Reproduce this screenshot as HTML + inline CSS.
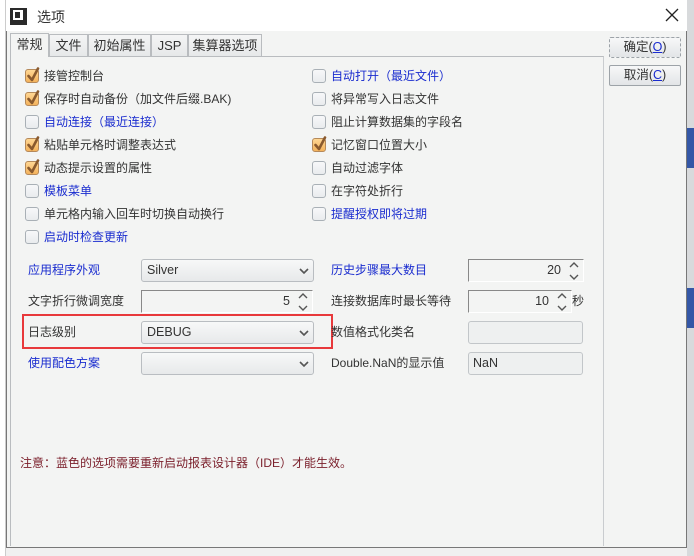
<!DOCTYPE html>
<html><head><meta charset="utf-8"><style>
*{margin:0;padding:0;box-sizing:border-box}
body{width:694px;height:556px;overflow:hidden;background:#f0f0f0;font-family:"Liberation Sans","Noto Sans CJK SC",sans-serif;font-size:12px;color:#333;position:relative}
.a{position:absolute}
.dlg{left:6px;top:0;width:681px;height:548px;background:#f3f4f3;border:1px solid #777;border-top:none}
.title{left:6px;top:0;width:681px;height:31px;background:#fff}
.tab{top:34px;height:22px;border:1px solid #b9bcbf;border-bottom:none;background:linear-gradient(#f4f5f5,#e6e8e9);text-align:center;line-height:21px;font-size:13px;color:#333}
.cb{width:14px;height:14px;border:1px solid #a9b0b6;border-radius:3px;background:linear-gradient(#f7f8f9,#e9ecee)}
.cb.on{background:linear-gradient(#ffd693,#f4b25c);border-color:#b5895a}
.cb svg{position:absolute;left:0;top:-3px}
.lbl{font-size:12px;line-height:16px;white-space:nowrap}
.blue{color:#1a2ccf}
.combo{width:173px;height:23px;border:1px solid #b9bdc1;border-radius:3px;background:linear-gradient(#f7f8f8,#e7e9ea);padding-left:5px;line-height:21px;font-size:12.5px}
.spin{height:23px;border:1px solid #888;border-right-color:#fff;border-bottom-color:#fff;background:#f3f4f3;text-align:right;line-height:21px;font-size:12.5px}
.btn{left:609px;width:72px;height:21px;border:1px solid #9da3a8;border-radius:2px;background:linear-gradient(#f7f8f8,#e2e5e7);text-align:center;line-height:19px;font-size:12.5px}
.arr{position:absolute;right:3px;top:3px}
</style></head><body>
<svg width="0" height="0" style="position:absolute"><defs>
<symbol id="ck" viewBox="0 0 14 16"><path d="M2.5 9 L6 13 L12 1.5" fill="none" stroke="#8a5a2e" stroke-width="2.6" stroke-linecap="round" stroke-linejoin="round"/></symbol>
<symbol id="dn" viewBox="0 0 12 8"><path d="M2 2 L6 6 L10 2" fill="none" stroke="#555" stroke-width="1.6"/></symbol>
<symbol id="ud" viewBox="0 0 12 20"><path d="M2 6 L6 2 L10 6 M2 14 L6 18 L10 14" fill="none" stroke="#555" stroke-width="1.4"/></symbol>
</defs></svg>
<div class="a" style="left:0;top:0;width:6px;height:556px;background:#fff;border-right:1px solid #ccc"></div>
<div class="a" style="left:687px;top:0;width:7px;height:556px;background:#d8dadc"></div>
<div class="a" style="left:687px;top:128px;width:7px;height:40px;background:#3457a6"></div>
<div class="a" style="left:687px;top:288px;width:7px;height:40px;background:#3457a6"></div>
<div class="a dlg"></div>
<div class="a title"></div>
<div class="a" style="left:10px;top:8px;width:17px;height:17px;background:#2a2a2a"></div>
<div class="a" style="left:13px;top:10px;width:10px;height:10px;border:2px solid #fff;border-right-width:3px"></div>
<div class="a" style="left:37px;top:7px;font-size:14px">选项</div>
<svg class="a" style="left:665px;top:8px" width="14" height="14"><path d="M1 1 L13 13 M13 1 L1 13" stroke="#222" stroke-width="1.3"/></svg>
<div class="a" style="left:10px;top:56px;width:594px;height:490px;border-top:1px solid #b9bcbf;border-left:1px solid #b9bcbf;border-right:1px solid #c9cccf"></div>
<div class="a tab" style="left:10px;width:39px;top:33px;height:24px;background:#f3f4f3">常规</div>
<div class="a tab" style="left:49px;width:39px">文件</div>
<div class="a tab" style="left:88px;width:63px">初始属性</div>
<div class="a tab" style="left:151px;width:37px">JSP</div>
<div class="a tab" style="left:188px;width:74px">集算器选项</div>
<div class="a btn" style="top:37px;border-style:dashed">确定(<span style="color:#1a2ccf;text-decoration:underline">O</span>)</div>
<div class="a btn" style="top:65px">取消(<span style="color:#1a2ccf;text-decoration:underline">C</span>)</div>

<div class="a cb on" style="left:25px;top:69px"><svg width="14" height="16"><use href="#ck"/></svg></div><div class="a lbl" style="left:44px;top:68px">接管控制台</div>
<div class="a cb on" style="left:25px;top:92px"><svg width="14" height="16"><use href="#ck"/></svg></div><div class="a lbl" style="left:44px;top:91px">保存时自动备份（加文件后缀.BAK)</div>
<div class="a cb" style="left:25px;top:115px"></div><div class="a lbl blue" style="left:44px;top:114px">自动连接（最近连接）</div>
<div class="a cb on" style="left:25px;top:138px"><svg width="14" height="16"><use href="#ck"/></svg></div><div class="a lbl" style="left:44px;top:137px">粘贴单元格时调整表达式</div>
<div class="a cb on" style="left:25px;top:161px"><svg width="14" height="16"><use href="#ck"/></svg></div><div class="a lbl" style="left:44px;top:160px">动态提示设置的属性</div>
<div class="a cb" style="left:25px;top:184px"></div><div class="a lbl blue" style="left:44px;top:183px">模板菜单</div>
<div class="a cb" style="left:25px;top:207px"></div><div class="a lbl" style="left:44px;top:206px">单元格内输入回车时切换自动换行</div>
<div class="a cb" style="left:25px;top:230px"></div><div class="a lbl blue" style="left:44px;top:229px">启动时检查更新</div>

<div class="a cb" style="left:312px;top:69px"></div><div class="a lbl blue" style="left:331px;top:68px">自动打开（最近文件）</div>
<div class="a cb" style="left:312px;top:92px"></div><div class="a lbl" style="left:331px;top:91px">将异常写入日志文件</div>
<div class="a cb" style="left:312px;top:115px"></div><div class="a lbl" style="left:331px;top:114px">阻止计算数据集的字段名</div>
<div class="a cb on" style="left:312px;top:138px"><svg width="14" height="16"><use href="#ck"/></svg></div><div class="a lbl" style="left:331px;top:137px">记忆窗口位置大小</div>
<div class="a cb" style="left:312px;top:161px"></div><div class="a lbl" style="left:331px;top:160px">自动过滤字体</div>
<div class="a cb" style="left:312px;top:184px"></div><div class="a lbl" style="left:331px;top:183px">在字符处折行</div>
<div class="a cb" style="left:312px;top:207px"></div><div class="a lbl blue" style="left:331px;top:206px">提醒授权即将过期</div>

<div class="a lbl blue" style="left:28px;top:262px">应用程序外观</div>
<div class="a combo" style="left:141px;top:259px">Silver<svg class="arr" style="top:7px;right:3px" width="12" height="8"><use href="#dn"/></svg></div>
<div class="a lbl" style="left:28px;top:293px">文字折行微调宽度</div>
<div class="a spin" style="left:141px;top:290px;width:172px;padding-right:22px">5<svg class="arr" style="top:1px" width="12" height="20"><use href="#ud"/></svg></div>
<div class="a lbl" style="left:28px;top:324px">日志级别</div>
<div class="a combo" style="left:141px;top:321px">DEBUG<svg class="arr" style="top:7px" width="12" height="8"><use href="#dn"/></svg></div>
<div class="a lbl blue" style="left:28px;top:355px">使用配色方案</div>
<div class="a combo" style="left:141px;top:352px"><svg class="arr" style="top:7px" width="12" height="8"><use href="#dn"/></svg></div>
<div class="a" style="left:22px;top:314px;width:311px;height:35px;border:2px solid #e8393b"></div>

<div class="a lbl blue" style="left:331px;top:262px">历史步骤最大数目</div>
<div class="a spin" style="left:468px;top:259px;width:116px;padding-right:22px">20<svg class="arr" style="top:1px" width="12" height="20"><use href="#ud"/></svg></div>
<div class="a lbl" style="left:331px;top:293px">连接数据库时最长等待</div>
<div class="a spin" style="left:468px;top:290px;width:104px;padding-right:22px">10<svg class="arr" style="top:1px" width="12" height="20"><use href="#ud"/></svg></div>
<div class="a lbl" style="left:572px;top:293px">秒</div>
<div class="a lbl" style="left:331px;top:324px">数值格式化类名</div>
<div class="a" style="left:468px;top:321px;width:115px;height:23px;border:1px solid #c2c6c9;border-radius:3px;background:#eef0f0"></div>
<div class="a lbl" style="left:331px;top:355px">Double.NaN的显示值</div>
<div class="a" style="left:468px;top:352px;width:115px;height:23px;border:1px solid #c2c6c9;border-radius:3px;background:#eef0f0;padding-left:4px;line-height:21px;font-size:12.5px">NaN</div>

<div class="a lbl" style="left:20px;top:455px;color:#7a1e2a">注意：蓝色的选项需要重新启动报表设计器（IDE）才能生效。</div>
</body></html>
